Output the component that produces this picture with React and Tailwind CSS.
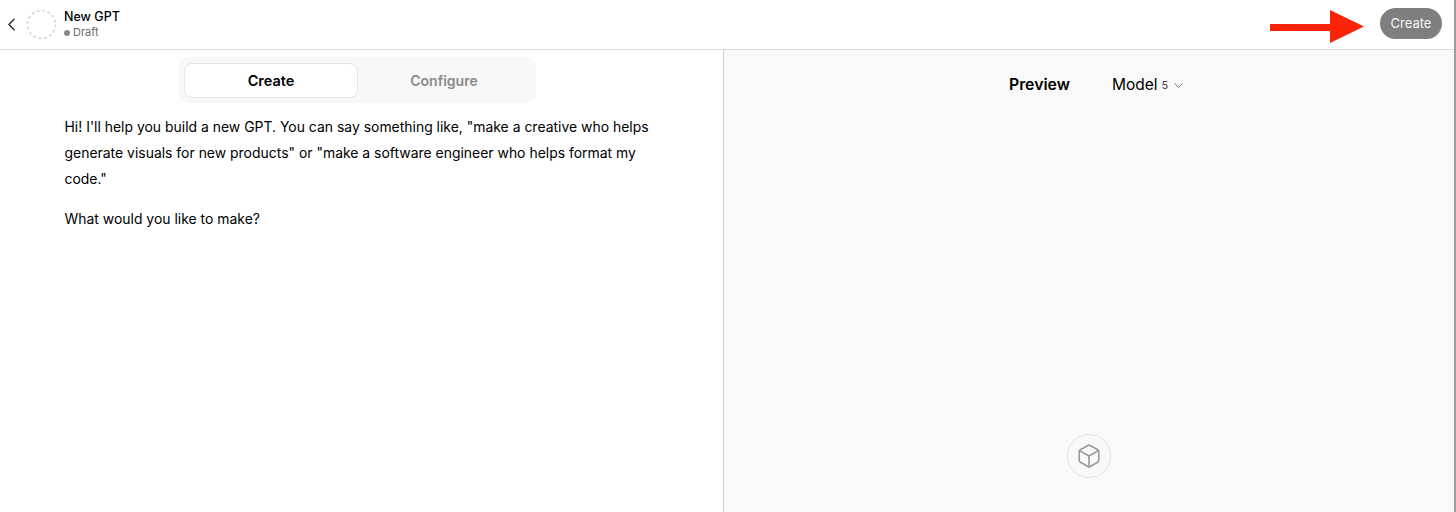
import { ChevronLeft, ChevronDown, Box } from 'lucide-react';

function Header() {
  return (
    <header className="h-[50px] shrink-0 flex items-center justify-between border-b border-[#dcdcdc] bg-white pl-[1px] pr-[12px]">
      <div className="flex items-center">
        <ChevronLeft size={21} strokeWidth={1.5} className="text-[#222]" />
        <svg width="31" height="31" viewBox="0 0 31 31" className="ml-[4px]">
          <circle cx="15.5" cy="15.5" r="14" fill="none" stroke="#d4d4d4" strokeWidth="1.5" strokeDasharray="3 2.5" />
        </svg>
        <div className="ml-[7px] -mt-[2px]">
          <div className="text-[12.5px] leading-[18px] font-medium text-black">New GPT</div>
          <div className="flex items-center text-[11px] leading-[13px] text-[#6b6b6b]">
            <span className="w-[6px] h-[6px] rounded-full bg-[#8a8a8a] mr-[3px]" />
            Draft
          </div>
        </div>
      </div>
      <div className="flex items-center">
        {/* Red annotation arrow */}
        <svg width="94" height="33" viewBox="0 0 94 33" className="mr-[16px] mt-[4px]">
          <path d="M0 14H60V0L94 16.5L60 33V21H0Z" fill="#fb2407" />
        </svg>
        <button className="w-[62px] h-[31px] -mt-[2px] pt-[1px] rounded-full bg-[#7f7f7f] text-white/95 text-[13px]">Create</button>
      </div>
    </header>
  );
}

function Tabs() {
  return (
    <div className="ml-[178px] mt-[7px] w-[358px] h-[46px] rounded-[10px] bg-[#f8f8f8] flex items-center p-[6px]">
      <button className="w-[174px] h-[35px] pt-[1px] rounded-[8px] bg-white border border-[#e6e6e6] text-[14.5px] font-semibold text-black">Create</button>
      <button className="flex-1 h-[35px] text-[14px] font-semibold text-[#8a8a8a]">Configure</button>
    </div>
  );
}

function Builder() {
  return (
    <section className="w-[723px] shrink-0 bg-white">
      <Tabs />
      <div className="pl-[64.5px] pr-[50px] mt-[11px] text-[13.95px] leading-[26px] text-black">
        <p>Hi! I'll help you build a new GPT. You can say something like, "make a creative who helps<br />generate visuals for new products" or "make a software engineer who helps format my<br />code."</p>
        <p className="mt-[14px]">What would you like to make?</p>
      </div>
    </section>
  );
}

function Preview() {
  return (
    <section className="flex-1 border-l border-[#cfcfcf] bg-[#f9f9f9] flex flex-col">
      <div className="mt-[23px] ml-[285px] flex items-center">
        <span className="text-[15.8px] leading-[24px] font-semibold text-black">Preview</span>
        <span className="ml-[42px] text-[15.5px] leading-[24px] text-black">Model</span>
        <span className="ml-[4px] text-[11px] text-[#444]">5</span>
        <ChevronDown size={15} strokeWidth={1.5} className="ml-[3px] text-[#666]" />
      </div>
      <div className="mt-[337px] ml-[343px] w-[44px] h-[44px] rounded-full border border-[#e3e3e3] flex items-center justify-center">
        <Box size={26} strokeWidth={1.5} className="text-[#9a9a9a]" />
      </div>
    </section>
  );
}

export default function App() {
  return (
    <div className="w-[1456px] h-[512px] overflow-hidden flex font-['Inter',sans-serif]">
      <div className="flex-1 min-w-0 flex flex-col">
        <Header />
        <main className="flex-1 flex min-h-0">
          <Builder />
          <Preview />
        </main>
      </div>
      <div className="w-[2px] shrink-0 bg-[#a39d94]" />
    </div>
  );
}
